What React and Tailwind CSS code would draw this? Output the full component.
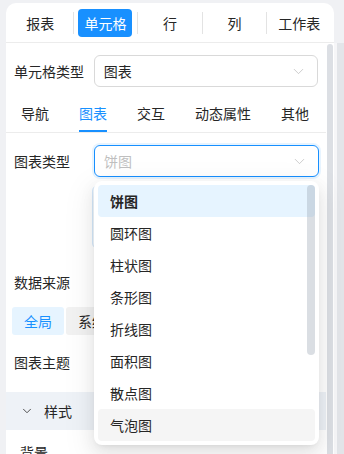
import { ChevronDown } from "lucide-react";

const TOP_TABS = ["报表", "单元格", "行", "列", "工作表"];
const SUB_TABS = ["导航", "图表", "交互", "动态属性", "其他"];
const CHART_TYPES = ["饼图", "圆环图", "柱状图", "条形图", "折线图", "面积图", "散点图", "气泡图"];

const font = { fontFamily: '"Noto Sans CJK SC", "Noto Sans", sans-serif' };

function Select({ value, placeholder, focused }) {
  return (
    <div
      className={`flex h-8 w-[225px] items-center justify-between rounded-md border bg-white pl-[9px] pr-[10px] ${
        focused ? "border-[#1890ff] shadow-[0_0_0_2px_rgba(24,144,255,0.1)]" : "border-[#d9d9d9]"
      }`}
    >
      <span className={`text-[14px] ${value ? "text-[#262626]" : "text-[#bfbfbf]"}`}>{value || placeholder}</span>
      <ChevronDown size={17} strokeWidth={1.1} className="text-[#bfbfbf]" />
    </div>
  );
}

export default function App() {
  return (
    <div style={font} className="flex h-[454px] w-[344px] overflow-hidden bg-[#f0f1f4] pl-[6px] pt-[3px]">
      <div className="relative flex h-full w-[328px] flex-col rounded-t-[10px] bg-white">
        <div className="flex h-[40px] shrink-0 items-center border-b border-[#ececec] pl-[2px] pr-[3px]">
          {TOP_TABS.map((tab, i) => (
            <div key={tab} className="flex h-full flex-1 items-center">
              {i > 0 ? <div className="h-[22px] w-px bg-[#e3e3e3]" /> : null}
              <div className="flex flex-1 justify-center">
                <span
                  className={`rounded-[4px] px-[6px] py-[2px] text-[14px] leading-6 ${
                    tab === "单元格" ? "bg-[#1890ff] text-white" : "text-[#262626]"
                  }`}
                >
                  {tab}
                </span>
              </div>
            </div>
          ))}
        </div>

        <div className="flex min-h-0 flex-1">
          <div className="flex-1 overflow-hidden">
            <div className="mt-[12px] flex items-center pl-[8px] pr-[8px]">
              <span className="w-[80px] text-[14px] text-[#262626]">单元格类型</span>
              <Select value="图表" />
            </div>

            <div className="mt-[8px] flex h-[38px] items-stretch gap-[30px] border-b border-[#ececec] pl-[15px]">
              {SUB_TABS.map((tab) => (
                <div
                  key={tab}
                  className={`flex items-center border-b-[2px] pt-[2px] text-[14px] ${
                    tab === "图表" ? "border-[#1890ff] text-[#1890ff]" : "border-transparent text-[#262626]"
                  }`}
                >
                  {tab}
                </div>
              ))}
            </div>

            <div className="mt-[12px] flex items-center pl-[8px]">
              <span className="w-[80px] text-[14px] text-[#262626]">图表类型</span>
              <Select placeholder="饼图" focused />
            </div>

            <div className="ml-[86px] mt-[8px] h-[64px] w-[200px] rounded-md border border-[#d5e9fb] bg-[#f4faff]" />

            <div className="mt-[23px] pl-[8px] text-[14px] text-[#262626]">数据来源</div>

            <div className="mt-[14px] flex gap-[2px] pl-[6px]">
              <div className="flex h-[28px] w-[52px] items-center justify-center rounded-[3px] bg-[#e6f4ff] text-[14px] text-[#1890ff]">全局</div>
              <div className="flex h-[28px] w-[52px] items-center justify-center rounded-[3px] bg-[#f2f2f2] text-[14px] text-[#262626]">系统</div>
            </div>

            <div className="mt-[17px] pl-[8px] text-[14px] text-[#262626]">图表主题</div>

            <div className="mt-[19px] flex h-[38px] items-center gap-[10px] bg-[#eef2f7] pl-[14px]">
              <ChevronDown size={14} strokeWidth={1.6} className="text-[#444]" />
              <span className="text-[14px] text-[#262626]">样式</span>
            </div>

            <div className="mt-[12px] pl-[14px] text-[14px] text-[#262626]">背景</div>
          </div>

          <div className="flex w-[7px] shrink-0 justify-center">
            <div className="mt-[1px] h-[440px] w-[6px] rounded-t-full bg-[#dcdfe4]" />
          </div>
          <div className="w-px" />
        </div>

        <div className="absolute left-[88px] top-[178px] w-[225px] rounded-lg bg-white p-[4px] shadow-[0_6px_16px_0_rgba(0,0,0,0.08),0_3px_6px_-4px_rgba(0,0,0,0.12),0_9px_28px_8px_rgba(0,0,0,0.05)]">
          {CHART_TYPES.map((item) => (
            <div
              key={item}
              className={`flex h-8 items-center rounded-[4px] pl-[12px] text-[14px] text-[#262626] ${
                item === "饼图" ? "bg-[#e6f4ff] font-semibold" : item === "气泡图" ? "bg-[#f5f5f5]" : ""
              }`}
            >
              {item}
            </div>
          ))}
          <div className="absolute right-[4px] top-[4px] h-[170px] w-[8px] rounded-full bg-[rgba(150,160,175,0.35)]" />
        </div>
      </div>
      <div className="mt-[40px] flex w-[10px] flex-col">
        <div className="flex flex-1">
          <div className="w-[3px] bg-[#f6f6f8]" />
          <div className="flex-1 bg-[#e3e5e9]" />
        </div>
      </div>
    </div>
  );
}
